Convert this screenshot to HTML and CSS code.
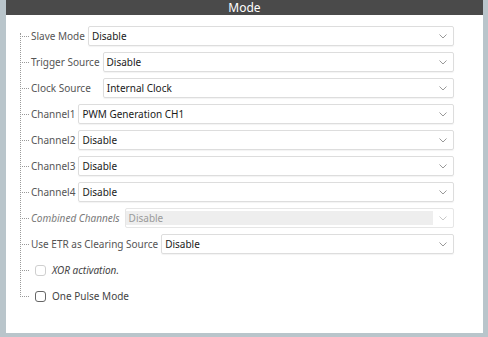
FILE: index.html
```html
<!DOCTYPE html>
<html>
<head>
<meta charset="utf-8">
<link rel="stylesheet" href="styles.css">
</head>
<body>
<div class="panel">
  <div class="header">Mode</div>
  <div class="tree">
    <div class="row"><span class="label">Slave Mode</span><div class="select"><span class="value">Disable</span><svg class="chev" width="8" height="5" viewBox="0 0 8 5"><polyline points="0.5,0.5 4,4 7.5,0.5"/></svg></div></div>
    <div class="row"><span class="label">Trigger Source</span><div class="select"><span class="value">Disable</span><svg class="chev" width="8" height="5" viewBox="0 0 8 5"><polyline points="0.5,0.5 4,4 7.5,0.5"/></svg></div></div>
    <div class="row"><span class="label label-clock">Clock Source</span><div class="select"><span class="value">Internal Clock</span><svg class="chev" width="8" height="5" viewBox="0 0 8 5"><polyline points="0.5,0.5 4,4 7.5,0.5"/></svg></div></div>
    <div class="row"><span class="label">Channel1</span><div class="select"><span class="value">PWM Generation CH1</span><svg class="chev" width="8" height="5" viewBox="0 0 8 5"><polyline points="0.5,0.5 4,4 7.5,0.5"/></svg></div></div>
    <div class="row"><span class="label">Channel2</span><div class="select"><span class="value">Disable</span><svg class="chev" width="8" height="5" viewBox="0 0 8 5"><polyline points="0.5,0.5 4,4 7.5,0.5"/></svg></div></div>
    <div class="row"><span class="label">Channel3</span><div class="select"><span class="value">Disable</span><svg class="chev" width="8" height="5" viewBox="0 0 8 5"><polyline points="0.5,0.5 4,4 7.5,0.5"/></svg></div></div>
    <div class="row"><span class="label">Channel4</span><div class="select"><span class="value">Disable</span><svg class="chev" width="8" height="5" viewBox="0 0 8 5"><polyline points="0.5,0.5 4,4 7.5,0.5"/></svg></div></div>
    <div class="row"><span class="label label-disabled label-combined">Combined Channels</span><div class="select select-disabled"><span class="value">Disable</span><svg class="chev" width="8" height="5" viewBox="0 0 8 5"><polyline points="0.5,0.5 4,4 7.5,0.5"/></svg></div></div>
    <div class="row"><span class="label">Use ETR as Clearing Source</span><div class="select"><span class="value">Disable</span><svg class="chev" width="8" height="5" viewBox="0 0 8 5"><polyline points="0.5,0.5 4,4 7.5,0.5"/></svg></div></div>
    <div class="row"><span class="check check-disabled"></span><span class="check-label label-disabled">XOR activation.</span></div>
    <div class="row"><span class="check"></span><span class="check-label">One Pulse Mode</span></div>
  </div>
</div>
</body>
</html>
```

FILE: styles.css
```css
html, body {
  margin: 0;
  padding: 0;
}
body {
  background: #b9c5cb;
  font-family: "Noto Sans", "Open Sans", sans-serif;
  width: 488px;
  height: 337px;
  overflow: hidden;
}
.panel {
  margin-left: 6px;
  width: 477px;
  height: 333px;
  background: #ffffff;
}
.header {
  height: 15px;
  background: #4a4a4a;
  color: #ffffff;
  text-align: center;
  font-size: 12px;
  line-height: 16px;
  overflow: hidden;
}
.tree {
  position: relative;
  margin-left: 14px;
  padding: 11px 29px 0 11px;
}
.tree::before {
  content: "";
  position: absolute;
  left: 0;
  top: 18px;
  height: 264px;
  border-left: 1px dotted #9a9a9a;
}
.row {
  position: relative;
  display: flex;
  align-items: center;
  height: 20px;
  margin-bottom: 6px;
}
.row::before {
  content: "";
  position: absolute;
  left: -11px;
  top: 10px;
  width: 9px;
  border-top: 1px dotted #9a9a9a;
}
.label {
  font-size: 10px;
  color: #555555;
  margin-right: 3px;
  white-space: nowrap;
}
.label-clock {
  margin-right: 12px;
}
.label-combined {
  margin-right: 5px;
}
.label-disabled {
  font-style: italic;
  color: #7a7a7a;
}
.select {
  flex: 1;
  height: 20px;
  box-sizing: border-box;
  border: 1px solid #dddddd;
  border-radius: 2px;
  box-shadow: 0 1px 1px rgba(0, 0, 0, 0.05);
  display: flex;
  align-items: center;
  padding-left: 3px;
}
.value {
  font-size: 10px;
  color: #1a1a1a;
  white-space: nowrap;
}
.chev {
  margin-left: auto;
  margin-right: 6px;
  fill: none;
  stroke: #999999;
  stroke-width: 1;
}
.select-disabled {
  padding-left: 0;
  border-color: #e6e6e6;
  box-shadow: none;
}
.select-disabled .value {
  flex: 1;
  align-self: stretch;
  margin: 2px 0;
  padding-left: 3px;
  background: #eeeeee;
  color: #9a9a9a;
  display: flex;
  align-items: center;
}
.select-disabled .chev {
  margin-left: 6px;
  stroke: #c8c8c8;
}
.check {
  width: 11px;
  height: 11px;
  box-sizing: border-box;
  border: 1px solid #666666;
  border-radius: 3px;
  margin-left: 4px;
}
.check-disabled {
  border-color: #cfcfcf;
}
.check-label {
  font-size: 10px;
  color: #444444;
  margin-left: 6px;
}
```
